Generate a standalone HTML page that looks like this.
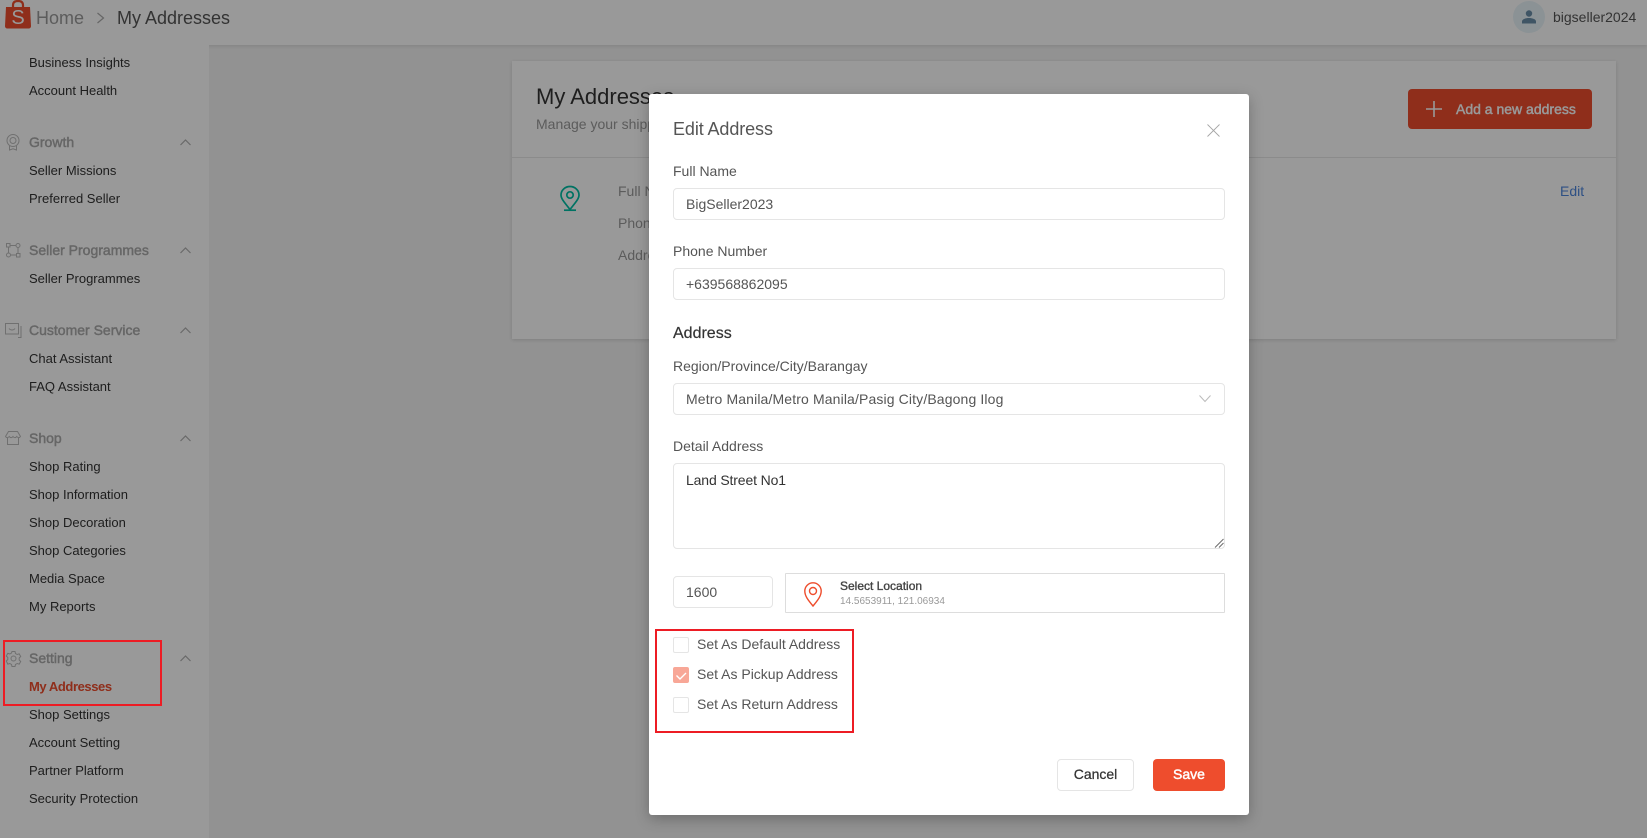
<!DOCTYPE html>
<html lang="en"><head><meta charset="utf-8"><title>My Addresses</title>
<style>
*{box-sizing:border-box}
html,body{margin:0;padding:0;width:1647px;height:838px;overflow:hidden;background:#f4f4f4;font-family:"Liberation Sans",Arial,sans-serif}
.a{position:absolute}
.t{position:absolute;line-height:20px;height:20px;white-space:nowrap;font-size:14px}
.top{left:0;top:0;width:1647px;height:45px;background:#fff;box-shadow:0 1px 4px rgba(0,0,0,.12)}
.side{left:0;top:45px;width:209px;height:793px;background:#fff}
.it{left:29px;font-size:13px;color:#333}
.h{left:29px;font-size:14px;color:#aaa;-webkit-text-stroke:.45px #aaa}
.card{left:512px;top:61px;width:1104px;height:278px;background:#fff;box-shadow:0 1px 4px rgba(0,0,0,.14)}
.ov{left:0;top:0;width:1647px;height:838px;background:rgba(0,0,0,.4)}
.m{left:649px;top:94px;width:600px;height:721px;background:#fff;border-radius:3px;box-shadow:0 4px 14px rgba(0,0,0,.25)}
.l{left:673px;color:#555}
.v{left:686px;color:#555}
.i{left:673px;width:552px;height:32px;border:1px solid #e5e5e5;border-radius:4px;background:#fff}
.c{left:673px;width:16px;height:16px;border:1px solid #e5e5e5;border-radius:2px;background:#fff}
.cl{left:697px;color:#555}
.r{border:2px solid #ed1c24}
svg{position:absolute;overflow:visible;fill:none}
</style></head><body>
<div class="a top"></div>
<svg style="left:5px;top:0" width="26" height="29" viewBox="0 0 26 29"><path d="M8 8V5C8 2 10 1 13 1s5 1 5 4v3" stroke="#ee4d2d" stroke-width="2.200"/><path d="M1 7h24l1 19c0 1.500-1 2.500-2.500 2.500h-21C1 28.500 0 27.500 0 26z" fill="#ee4d2d"/></svg>
<div class="t" style="left:8px;top:8px;width:20px;text-align:center;color:#fff;font-size:20px">S</div>
<div class="t" style="left:36px;top:8px;font-size:18px;color:#999">Home</div>
<svg style="left:96px;top:12px" width="9" height="12"><path d="M1.500 1l6 5-6 5" stroke="#aaa" stroke-width="1.200"/></svg>
<div class="t" style="left:117px;top:8px;font-size:18px;color:#555">My Addresses</div>
<div class="a" style="left:1513px;top:1px;width:32px;height:32px;border-radius:50%;background:#e8f4f9"></div>
<svg style="left:1521px;top:9px" width="16" height="16" viewBox="0 0 16 16"><circle cx="8" cy="4.500" r="3.200" fill="#698ea8"/><path d="M1 14.500v-2C1 10 5 9 8 9s7 1 7 3.500v2z" fill="#698ea8"/></svg>
<div class="t" style="left:1553px;top:7px;color:#555">bigseller2024</div>

<div class="a side"></div>
<div class="t it" style="top:53px">Business Insights</div>
<div class="t it" style="top:81px">Account Health</div>
<div class="t h" style="top:132px">Growth</div>
<div class="t it" style="top:161px">Seller Missions</div>
<div class="t it" style="top:189px">Preferred Seller</div>
<div class="t h" style="top:240px">Seller Programmes</div>
<div class="t it" style="top:269px">Seller Programmes</div>
<div class="t h" style="top:320px">Customer Service</div>
<div class="t it" style="top:349px">Chat Assistant</div>
<div class="t it" style="top:377px">FAQ Assistant</div>
<div class="t h" style="top:428px">Shop</div>
<div class="t it" style="top:457px">Shop Rating</div>
<div class="t it" style="top:485px">Shop Information</div>
<div class="t it" style="top:513px">Shop Decoration</div>
<div class="t it" style="top:541px">Shop Categories</div>
<div class="t it" style="top:569px">Media Space</div>
<div class="t it" style="top:597px">My Reports</div>
<div class="t h" style="top:648px">Setting</div>
<div class="t it" style="top:677px;color:#ee4d2d;font-weight:700;letter-spacing:-.42px">My Addresses</div>
<div class="t it" style="top:705px">Shop Settings</div>
<div class="t it" style="top:733px">Account Setting</div>
<div class="t it" style="top:761px">Partner Platform</div>
<div class="t it" style="top:789px">Security Protection</div>

<svg style="left:180px;top:0" width="11" height="700" stroke="#b0b0b0" stroke-width="1.200"><path d="M.5 145l5-5 5 5M.5 253l5-5 5 5M.5 333l5-5 5 5M.5 441l5-5 5 5M.5 661l5-5 5 5"/></svg>
<!-- sidebar icons -->
<svg style="left:6px;top:134px" width="15" height="17" stroke="#bbb"><circle cx="7" cy="6.500" r="6"/><circle cx="7" cy="6.500" r="3"/><path d="M3.500 12v4l3.500-1.200 3.500 1.200v-4"/></svg>
<svg style="left:6px;top:243px" width="15" height="15" stroke="#bbb"><rect x=".5" y=".5" width="3.500" height="3.500"/><circle cx="12" cy="2.500" r="2"/><circle cx="2.500" cy="12" r="2"/><rect x="10.500" y="10.500" width="3.500" height="3.500"/><path d="M4 2.500h6M2.500 4v6M4.500 12h6M12 4.500v6"/></svg>
<svg style="left:5px;top:323px" width="17" height="15" stroke="#bbb"><path d="M.5.500h13v10.500H.5zM16 3v11.500h-3"/><path d="M4 5.500c1.500 2 4.500 2 6 0"/></svg>
<svg style="left:5px;top:431px" width="16" height="14" stroke="#bbb"><path d="M3.500.5h9l3 5c-1 1.500-2.500 1.500-3.700 0-1 1.500-2.700 1.500-3.800 0-1 1.500-2.800 1.500-3.800 0C3 7 1.500 7 .5 5.500zM2.500 7v6.500h11V7"/></svg>
<svg style="left:6px;top:651px" width="15" height="15" viewBox="0 0 15 15" stroke="#bbb"><circle cx="7.500" cy="7.500" r="2.500"/><path d="M6 .5h3l.5 2 1.700 1 2-.6 1.500 2.600-1.500 1.500v2l1.500 1.500-1.500 2.600-2-.6-1.700 1-.5 2H6l-.5-2-1.700-1-2 .6L.3 10l1.500-1.500v-2L.3 5l1.500-2.600 2 .6 1.700-1z"/></svg>

<div class="a card"></div>
<div class="t" style="left:536px;top:87px;font-size:22px;color:#333">My Addresses</div>
<div class="t" style="left:536px;top:114px;color:#999">Manage your shipping options</div>
<div class="a" style="left:512px;top:157px;width:1104px;height:1px;background:#e8e8e8"></div>
<svg style="left:560px;top:186px" width="20" height="26" viewBox="0 0 20 26" stroke="#00bfa5" stroke-width="1.700"><path d="M10 23.500C5 17 1 13 1 9a9 8.500 0 0 1 18 0c0 4-4 8-9 14.500z"/><circle cx="10" cy="9" r="3.200"/><path d="M4 24.200h12"/></svg>
<div class="t" style="left:618px;top:181px;color:#999">Full Name</div>
<div class="t" style="left:618px;top:213px;color:#999">Phone Number</div>
<div class="t" style="left:618px;top:245px;color:#999">Address</div>
<div class="t" style="left:1560px;top:181px;color:#4d85dc">Edit</div>
<div class="a" style="left:1408px;top:89px;width:184px;height:40px;background:#ee4d2d;border-radius:4px"></div>
<svg style="left:1426px;top:101px" width="16" height="16" stroke="#fff" stroke-width="1.600"><path d="M8 0v16M0 8h16"/></svg>
<div class="t" style="left:1456px;top:99px;color:#fff;-webkit-text-stroke:.45px #fff">Add a new address</div>

<div class="a ov"></div>

<div class="a m"></div>
<div class="t" style="left:673px;top:119px;font-size:18px;letter-spacing:-.1px;color:#555">Edit Address</div>
<svg style="left:1207px;top:124px" width="13" height="13" stroke="#a5a5a5" stroke-width=".9"><path d="M.5.500l12 12M12.500.5l-12 12"/></svg>

<div class="t l" style="top:161px">Full Name</div>
<div class="a i" style="top:188px"></div>
<div class="t v" style="top:194px">BigSeller2023</div>
<div class="t l" style="top:241px">Phone Number</div>
<div class="a i" style="top:268px"></div>
<div class="t v" style="top:274px">+639568862095</div>
<div class="t" style="left:673px;top:324px;font-size:16px;color:#333;-webkit-text-stroke:.2px #333">Address</div>
<div class="t l" style="top:356px">Region/Province/City/Barangay</div>
<div class="a i" style="top:383px"></div>
<div class="t v" style="top:389px;letter-spacing:.13px">Metro Manila/Metro Manila/Pasig City/Bagong Ilog</div>
<svg style="left:1199px;top:395px" width="12" height="7" stroke="#bbb"><path d="M.5.500l5.500 6 5.500-6"/></svg>
<div class="t l" style="top:436px">Detail Address</div>
<div class="a i" style="top:463px;height:86px"></div>
<div class="t" style="left:686px;top:470px;color:#333;letter-spacing:-.14px">Land Street No1</div>
<svg style="left:1215px;top:539px" width="9" height="9" stroke="#666" stroke-width=".9"><path d="M0 8.500L8.500 0M4 8.500L8.500 4"/></svg>
<div class="a i" style="top:576px;width:100px"></div>
<div class="t v" style="top:582px">1600</div>
<div class="a" style="left:785px;top:573px;width:440px;height:40px;border:1px solid #ddd;border-radius:1px"></div>
<svg style="left:804px;top:582px" width="18" height="25" viewBox="0 0 18 25" stroke="#ee4d2d" stroke-width="1.400"><path d="M9 24C4 18 .8 14 .8 9a8.200 8.200 0 0 1 16.400 0C17.200 14 14 18 9 24z"/><circle cx="9" cy="9" r="3.500"/></svg>
<div class="t" style="left:840px;top:576px;font-size:12px;color:#444;-webkit-text-stroke:.35px #444">Select Location</div>
<div class="t" style="left:840px;top:592px;font-size:10px;color:#999">14.5653911, 121.06934</div>

<div class="a c" style="top:637px"></div>
<div class="t cl" style="top:634px">Set As Default Address</div>
<div class="a c" style="top:667px;background:#f8a797;border-color:#f8a797"></div>
<svg style="left:676px;top:672px" width="11" height="8" stroke="#fff" stroke-width="1.400"><path d="M.5 3.500l3.500 3.500 6-6"/></svg>
<div class="t cl" style="top:664px">Set As Pickup Address</div>
<div class="a c" style="top:697px"></div>
<div class="t cl" style="top:694px">Set As Return Address</div>

<div class="a" style="left:1057px;top:759px;width:77px;height:32px;border:1px solid #e5e5e5;border-radius:4px;background:#fff"></div>
<div class="t" style="left:1057px;top:764px;width:77px;text-align:center;color:#333;-webkit-text-stroke:.25px #333">Cancel</div>
<div class="a" style="left:1153px;top:759px;width:72px;height:32px;background:#ee4d2d;border-radius:4px"></div>
<div class="t" style="left:1153px;top:764px;width:72px;text-align:center;color:#fff;-webkit-text-stroke:.45px #fff">Save</div>

<div class="a r" style="left:3px;top:640px;width:159px;height:66px"></div>
<div class="a r" style="left:655px;top:629px;width:199px;height:104px"></div>
</body></html>
